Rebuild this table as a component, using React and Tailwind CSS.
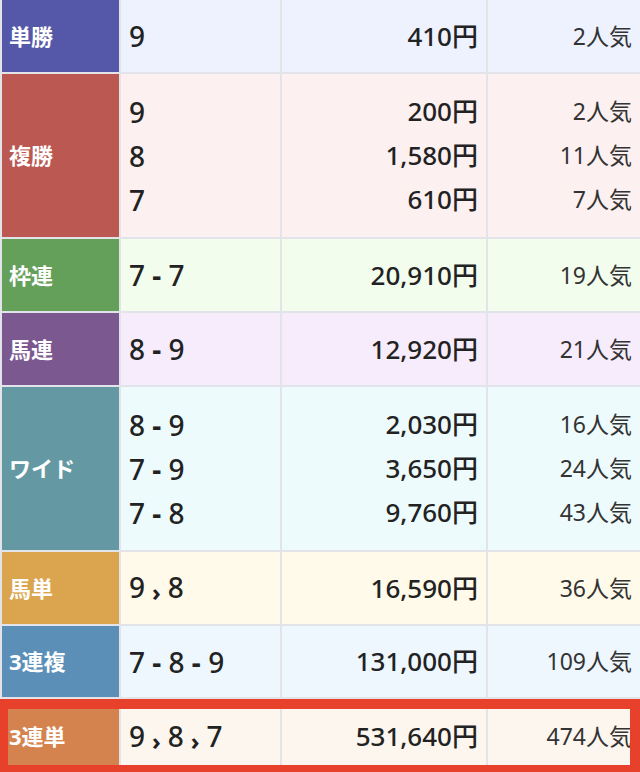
import React from 'react';

const rows = [
  { label: '単勝', color: 'bg-[#5558a8]', bg: 'bg-[#edf2fe]', h: 'h-[72px]', items: [['9', '410円', '2人気']] },
  {
    label: '複勝', color: 'bg-[#bb5852]', bg: 'bg-[#fcf0f0]', h: 'h-[163px]',
    items: [['9', '200円', '2人気'], ['8', '1,580円', '11人気'], ['7', '610円', '7人気']],
  },
  { label: '枠連', color: 'bg-[#65a05b]', bg: 'bg-[#f2fdee]', h: 'h-[72px]', items: [['7-7', '20,910円', '19人気']] },
  { label: '馬連', color: 'bg-[#7c5891]', bg: 'bg-[#f7ecfc]', h: 'h-[72px]', items: [['8-9', '12,920円', '21人気']] },
  {
    label: 'ワイド', color: 'bg-[#6499a3]', bg: 'bg-[#eefbfd]', h: 'h-[163px]',
    items: [['8-9', '2,030円', '16人気'], ['7-9', '3,650円', '24人気'], ['7-8', '9,760円', '43人気']],
  },
  { label: '馬単', color: 'bg-[#dba54f]', bg: 'bg-[#fffaea]', h: 'h-[72px]', items: [['9>8', '16,590円', '36人気']] },
  { label: '3連複', color: 'bg-[#5b8fb8]', bg: 'bg-[#eef6fe]', h: 'h-[71px]', items: [['7-8-9', '131,000円', '109人気']] },
  { label: '3連単', color: 'bg-[#d5834e]', bg: 'bg-[#fdf6ee]', h: 'h-[75px]', items: [['9>8>7', '531,640円', '474人気']], hit: true },
];

function Bet({ text }) {
  return (
    <span className="whitespace-pre">
      {text.split('').map((c, i) => {
        if (c === '-') return <span key={i} className="font-bold"> - </span>;
        if (c === '>') return <span key={i} className="text-[24px] font-bold mx-[7px] align-[-3px]">›</span>;
        return <span key={i}>{c}</span>;
      })}
    </span>
  );
}

export default function App() {
  return (
    <div className="w-[640px] h-[772px] overflow-hidden bg-[#e2e4ea] pl-[2px] flex flex-col gap-[2px] text-[#222] font-['Noto_Sans','Noto_Sans_CJK_JP',sans-serif]">
      {rows.map((row) => (
        <div key={row.label} className={`relative flex gap-[2px] shrink-0 ${row.h}`}>
          <div className={`w-[117px] flex items-center pl-[7px] text-white font-bold text-[22px] ${row.color}`}>
            {row.label}
          </div>
          <div className={`w-[159px] flex flex-col justify-center pl-[8px] text-[28px] font-medium ${row.bg}`}>
            {row.items.map((it, i) => (
              <div key={i} className="h-[44px] flex items-center"><Bet text={it[0]} /></div>
            ))}
          </div>
          <div className={`w-[204px] flex flex-col justify-center items-end pr-[8px] text-[26px] font-medium ${row.bg}`}>
            {row.items.map((it, i) => (
              <div key={i} className="h-[44px] flex items-center">{it[1]}</div>
            ))}
          </div>
          <div className={`flex-1 flex flex-col justify-center items-end pr-[8px] text-[23px] text-[#333] ${row.bg}`}>
            {row.items.map((it, i) => (
              <div key={i} className="h-[44px] flex items-center">{it[2]}</div>
            ))}
          </div>
          {row.hit && (
            <div className="absolute top-0 bottom-0 left-[-2px] right-0 border-t-[10px] border-l-[8px] border-r-[10px] border-b-[9px] border-[#e8412b]" />
          )}
        </div>
      ))}
    </div>
  );
}
